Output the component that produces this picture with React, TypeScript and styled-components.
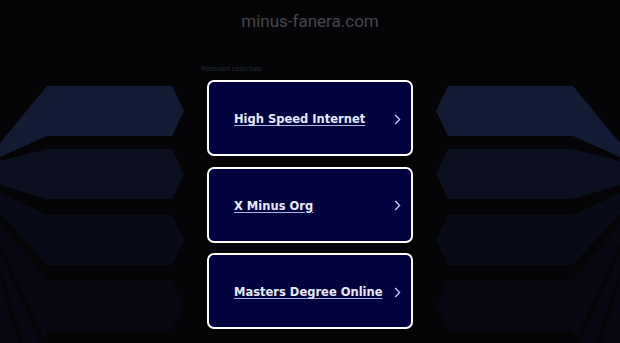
import React from "react";
import styled, { createGlobalStyle } from "styled-components";

const searches = ["High Speed Internet", "X Minus Org", "Masters Degree Online"];

const GlobalStyle = createGlobalStyle`
  html, body {
    margin: 0;
    padding: 0;
    background: #050508;
  }
  * { box-sizing: border-box; }
`;

const Page = styled.div`
  position: relative;
  min-height: 100vh;
  overflow: hidden;
  background: #050508;
`;

const Backdrop = styled.svg`
  position: absolute;
  top: 0;
  left: 0;
  width: 620px;
  height: 343px;
  z-index: 0;
`;

const Content = styled.main`
  position: relative;
  z-index: 1;
  display: flex;
  flex-direction: column;
  align-items: center;
`;

const Domain = styled.h1`
  margin: 9px 0 0;
  font-family: Roboto, "Liberation Sans", sans-serif;
  font-weight: 400;
  font-size: 17px;
  line-height: 24px;
  color: #45454c;
`;

const Section = styled.section`
  width: 218px;
  margin-top: 31px;
`;

const Label = styled.p`
  margin: 0 0 6px;
  font-family: "Liberation Sans", Arial, sans-serif;
  font-size: 7.3px;
  line-height: 10px;
  color: #27272d;
`;

const List = styled.div`
  display: flex;
  flex-direction: column;
  gap: 10.5px;
  padding: 0 6px;
`;

const Card = styled.a`
  display: flex;
  align-items: center;
  justify-content: space-between;
  height: 76px;
  padding: 2px 10px 0 25px;
  border: 2px solid #ffffff;
  border-radius: 7px;
  background: #02023f;
  text-decoration: none;
  cursor: pointer;
`;

const Term = styled.span`
  font-family: "DejaVu Sans", Verdana, sans-serif;
  font-weight: 700;
  font-size: 11.5px;
  color: #e8eaf8;
  text-decoration: underline;
  text-decoration-color: #aab2e0;
  text-underline-offset: 2px;
`;

const Chevron = () => (
  <svg width="7" height="11" viewBox="0 0 7 11">
    <path d="M1.2 1 L5.6 5.5 L1.2 10" fill="none" stroke="#c9d0f2" strokeWidth="1.3" />
  </svg>
);

const Fan = () => (
  <>
    <polygon fill="#131a33" points="0,143 47,86 172,86 184,111 172,136 47,136 0,157" />
    <polygon fill="#0c0f1f" points="0,161 47,149 172,149 184,174 172,199 47,199 0,185" />
    <polygon fill="#080a17" points="0,193 47,215 172,215 184,240 172,265 47,265 0,213" />
    <polygon fill="#060711" points="0,223 47,280 172,280 184,305 172,330 47,330 44,343 0,343" />
    <polygon fill="#050508" points="0,244 0,252 40,343 46,343" />
    <polygon fill="#050508" points="0,270 0,278 18,343 24,343" />
  </>
);

export default function App() {
  return (
    <Page>
      <GlobalStyle />
      <Backdrop viewBox="0 0 620 343" aria-hidden="true">
        <Fan />
        <g transform="translate(620 0) scale(-1 1)">
          <Fan />
        </g>
      </Backdrop>
      <Content>
        <Domain>minus-fanera.com</Domain>
        <Section>
          <Label>Relevant searches</Label>
          <List>
            {searches.map((s) => (
              <Card key={s}>
                <Term>{s}</Term>
                <Chevron />
              </Card>
            ))}
          </List>
        </Section>
      </Content>
    </Page>
  );
}
